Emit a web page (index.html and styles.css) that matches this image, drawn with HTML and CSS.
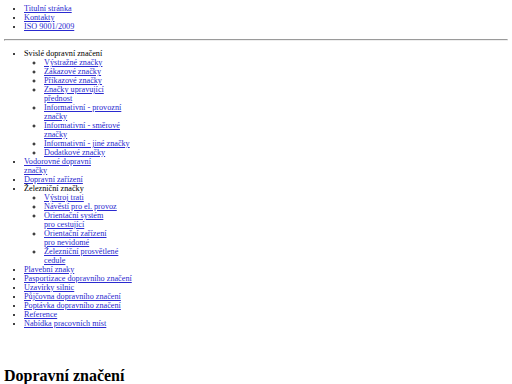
FILE: index.html
```html
<!DOCTYPE html>
<html lang="cs">
<head>
  <meta charset="UTF-8" />
  <title>Dopravní značení</title>
  <link rel="stylesheet" href="styles.css">
</head>
<body>

  <!-- Horní odkazy -->
  <ul class="top-links">
    <li><a href="#">Titulní stránka</a></li>
    <li><a href="#">Kontakty</a></li>
    <li><a href="#">ISO 9001/2009</a></li>
  </ul>

  <hr />

  <!-- Menu -->
  <ul class="menu">
    <li>Svislé dopravní značení
      <ul>
        <li><a href="#">Výstražné značky</a></li>
        <li><a href="#">Zákazové značky</a></li>
        <li><a href="#">Příkazové značky</a></li>
        <li><a href="#">Značky upravující<br>přednost</a></li>
        <li><a href="#">Informativní - provozní<br>značky</a></li>
        <li><a href="#">Informativní - směrové<br>značky</a></li>
        <li><a href="#">Informativní - jiné značky</a></li>
        <li><a href="#">Dodatkové značky</a></li>
      </ul>
    </li>
    <li><a href="#">Vodorovné dopravní<br>značky</a></li>
    <li><a href="#">Dopravní zařízení</a></li>
    <li>Železniční značky
      <ul>
        <li><a href="#">Výstroj trati</a></li>
        <li><a href="#">Návěstí pro el. provoz</a></li>
        <li><a href="#">Orientační systém<br>pro cestující</a></li>
        <li><a href="#">Orientační zařízení<br>pro nevidomé</a></li>
        <li><a href="#">Železniční prosvětlené<br>cedule</a></li>
      </ul>
    </li>
    <li><a href="#">Plavební znaky</a></li>
    <li><a href="#">Pasportizace dopravního značení</a></li>
    <li><a href="#">Uzavírky silnic</a></li>
    <li><a href="#">Půjčovna dopravního značení</a></li>
    <li><a href="#">Poptávka dopravního značení</a></li>
    <li><a href="#">Reference</a></li>
    <li><a href="#">Nabídka pracovních míst</a></li>
  </ul>

  <h1 class="nadpis">Dopravní značení</h1>

</body>
</html>
```

FILE: styles.css
```css
body {
  margin: 4px;
  font-family: "Liberation Serif", serif;
  font-size: 8.2px;
  line-height: 9px;
  color: #000;
}

a {
  color: #2a2ad0;
}

ul {
  margin: 8px 0;
  padding-left: 20px;
}

ul ul {
  margin: 0;
  list-style-type: circle;
}

.top-links {
  margin-top: 0;
}

hr {
  margin: 4px 0;
  border: 1px inset #eee;
}

.nadpis {
  font-size: 16px;
  line-height: 18px;
  margin: 39px 0 0;
}
```
